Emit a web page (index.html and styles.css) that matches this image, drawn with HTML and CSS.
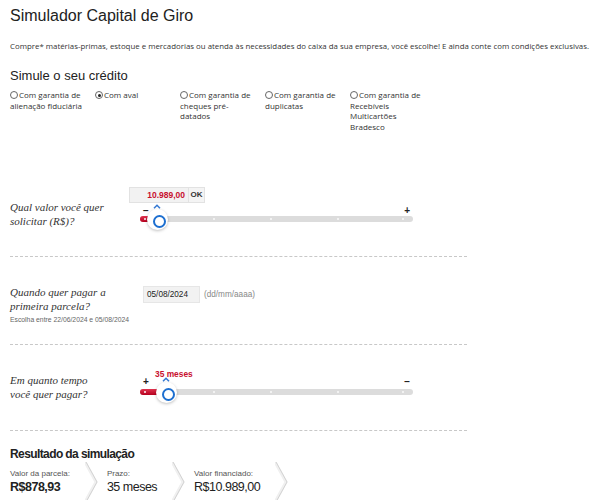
FILE: index.html
```html
<!DOCTYPE html>
<html lang="pt-BR">
<head>
<meta charset="utf-8">
<title>Simulador Capital de Giro</title>
<link rel="stylesheet" href="styles.css">
</head>
<body>
<main class="page">
  <h1 class="title">Simulador Capital de Giro</h1>
  <p class="intro">Compre* matérias-primas, estoque e mercadorias ou atenda às necessidades do caixa da sua empresa, você escolhe! E ainda conte com condições exclusivas.</p>

  <h2 class="subtitle">Simule o seu crédito</h2>
  <div class="options">
    <label class="opt"><span class="radio"></span>Com garantia de alienação fiduciária</label>
    <label class="opt"><span class="radio on"></span>Com aval</label>
    <label class="opt"><span class="radio"></span>Com garantia de cheques pré-datados</label>
    <label class="opt"><span class="radio"></span>Com garantia de duplicatas</label>
    <label class="opt"><span class="radio"></span>Com garantia de Recebíveis Multicartões Bradesco</label>
  </div>

  <section class="row row-value">
    <p class="question">Qual valor você quer solicitar (R$)?</p>
    <div class="control">
      <div class="amount">
        <span class="amount-input">10.989,00</span>
        <span class="ok">OK</span>
      </div>
      <div class="slider">
        <span class="sign sign-left">−</span>
        <span class="sign sign-right">+</span>
        <div class="track">
          <span class="fill" style="width: 17px"></span>
          <span class="dot" style="left: 4px"></span>
          <span class="dot" style="left: 73px"></span>
          <span class="dot" style="left: 130px"></span>
          <span class="dot" style="left: 197px"></span>
          <span class="dot" style="left: 262px"></span>
          <span class="knob" style="left: 17px">
            <svg class="caret" width="8" height="5" viewBox="0 0 8 5"><path d="M1 4.2 L4 1.2 L7 4.2" fill="none" stroke="#3579d3" stroke-width="1.5"/></svg>
          </span>
        </div>
      </div>
    </div>
  </section>

  <section class="row row-date">
    <div class="question-block">
      <p class="question">Quando quer pagar a primeira parcela?</p>
      <p class="hint">Escolha entre 22/06/2024 e 05/08/2024</p>
    </div>
    <div class="date">
      <span class="date-input">05/08/2024</span>
      <span class="date-format">(dd/mm/aaaa)</span>
    </div>
  </section>

  <section class="row row-term">
    <p class="question">Em quanto tempo você quer pagar?</p>
    <div class="control">
      <div class="slider slider-term">
        <span class="months" style="left: 15px">35 meses</span>
        <span class="sign sign-left">+</span>
        <span class="sign sign-right">−</span>
        <div class="track">
          <span class="fill" style="width: 26px"></span>
          <span class="dot" style="left: 4px"></span>
          <span class="dot" style="left: 73px"></span>
          <span class="dot" style="left: 130px"></span>
          <span class="dot" style="left: 197px"></span>
          <span class="dot" style="left: 262px"></span>
          <span class="knob" style="left: 26px">
            <svg class="caret" width="8" height="5" viewBox="0 0 8 5"><path d="M1 4.2 L4 1.2 L7 4.2" fill="none" stroke="#3579d3" stroke-width="1.5"/></svg>
          </span>
        </div>
      </div>
    </div>
  </section>

  <section class="result">
    <h3 class="result-title">Resultado da simulação</h3>
    <div class="result-items">
      <div class="item">
        <span class="item-label">Valor da parcela:</span>
        <span class="item-value strong">R$878,93</span>
      </div>
      <svg class="chev" width="13" height="40" viewBox="0 0 13 40"><path d="M0 0 L11 20 L0 40" fill="none" stroke="#f0f0f0" stroke-width="3"/><path d="M1 0 L12 20 L1 40" fill="none" stroke="#d2d2d2" stroke-width="1"/></svg>
      <div class="item">
        <span class="item-label">Prazo:</span>
        <span class="item-value">35 meses</span>
      </div>
      <svg class="chev" width="13" height="40" viewBox="0 0 13 40"><path d="M0 0 L11 20 L0 40" fill="none" stroke="#f0f0f0" stroke-width="3"/><path d="M1 0 L12 20 L1 40" fill="none" stroke="#d2d2d2" stroke-width="1"/></svg>
      <div class="item">
        <span class="item-label">Valor financiado:</span>
        <span class="item-value">R$10.989,00</span>
      </div>
      <svg class="chev" width="13" height="40" viewBox="0 0 13 40"><path d="M0 0 L11 20 L0 40" fill="none" stroke="#f0f0f0" stroke-width="3"/><path d="M1 0 L12 20 L1 40" fill="none" stroke="#d2d2d2" stroke-width="1"/></svg>
    </div>
  </section>
</main>
</body>
</html>
```

FILE: styles.css
```css
* { box-sizing: border-box; }

html, body {
  margin: 0;
  padding: 0;
  background: #fff;
}

body {
  font-family: "Liberation Sans", Arial, sans-serif;
  color: #333;
}

.page {
  padding: 0 10px;
  width: 609px;
}

.title {
  margin: 6px 0 0;
  font-size: 16px;
  line-height: 19px;
  font-weight: normal;
  color: #222;
}

.intro {
  margin: 16px 0 0;
  font-family: "Open Sans", sans-serif;
  font-size: 7.86px;
  line-height: 11px;
  color: #333;
  white-space: nowrap;
}

.subtitle {
  margin: 16px 0 0;
  font-size: 13px;
  line-height: 15px;
  font-weight: normal;
  color: #222;
}

.options {
  display: flex;
  margin-top: 7px;
  height: 44px;
}

.opt {
  display: block;
  width: 85px;
  padding-right: 9px;
  font-family: "Open Sans", sans-serif;
  font-size: 8px;
  line-height: 10.6px;
  color: #333;
}

.radio {
  display: inline-block;
  width: 8px;
  height: 8px;
  margin-right: 1px;
  vertical-align: -1px;
  border: 1px solid #666;
  border-radius: 50%;
  position: relative;
}

.radio.on::after {
  content: "";
  position: absolute;
  left: 1.5px;
  top: 1.5px;
  width: 3px;
  height: 3px;
  border-radius: 50%;
  background: #222;
}

/* question rows separated by dashed rules */
.row {
  display: flex;
  width: 457px;
  border-bottom: 1px dashed #c8c8c8;
}

.question {
  margin: 0;
  width: 100px;
  font-family: "Liberation Serif", "Times New Roman", serif;
  font-style: italic;
  font-size: 11px;
  line-height: 13.5px;
  color: #333;
}

.row-value {
  margin-top: 42px;
  height: 81px;
  padding-top: 11px;
}

.row-value .question {
  margin-top: 14px;
  margin-right: 19px;
}

.control {
  display: flex;
  flex-direction: column;
}

.amount {
  display: flex;
  height: 16px;
}

.amount-input {
  width: 59px;
  background: #f2f2f2;
  border: 1px solid #e2e2e2;
  border-right: none;
  color: #c8102e;
  font-weight: bold;
  font-size: 8.5px;
  line-height: 14px;
  text-align: right;
  padding-right: 3px;
}

.ok {
  width: 17px;
  background: #f4f4f4;
  border: 1px solid #e2e2e2;
  font-size: 8px;
  font-weight: bold;
  line-height: 14px;
  color: #333;
  text-align: center;
}

.slider {
  position: relative;
  width: 273px;
  height: 24px;
  margin-left: 11px;
}

.track {
  position: absolute;
  left: 0;
  right: 0;
  top: 13px;
  height: 6px;
  border-radius: 3px;
  background: #dcdcdc;
}

.fill {
  position: absolute;
  left: 0;
  top: 0;
  bottom: 0;
  border-radius: 3px 0 0 3px;
  background: linear-gradient(#e0334f, #b5001e);
}

.dot {
  position: absolute;
  top: 2px;
  width: 2px;
  height: 2px;
  border-radius: 50%;
  background: #fafafa;
}

.knob {
  position: absolute;
  top: 3px;
  width: 21px;
  height: 21px;
  margin: -10.5px 0 0 -10.5px;
  border-radius: 50%;
  background: #fff;
  box-shadow: 0 1px 3px rgba(0, 0, 0, 0.25);
}

.knob::after {
  content: "";
  position: absolute;
  left: 6px;
  top: 6px;
  width: 9px;
  height: 9px;
  border: 2px solid #1d6fd0;
  border-radius: 50%;
}

.caret {
  position: absolute;
  left: 6.5px;
  top: -5px;
}

.sign {
  position: absolute;
  top: 3px;
  font-size: 10px;
  line-height: 10px;
  font-weight: bold;
  color: #222;
}

.sign-left { left: 3px; }
.sign-right { right: 3px; }

.row-date {
  height: 88px;
  padding-top: 29px;
}

.question-block {
  width: 133px;
}

.hint {
  margin: 3px 0 0;
  font-size: 6.8px;
  line-height: 8px;
  color: #666;
}

.date {
  display: flex;
  align-items: flex-start;
  height: 17px;
}

.date-input {
  width: 57px;
  height: 17px;
  background: #f2f2f2;
  border: 1px solid #e6e6e6;
  font-size: 8.2px;
  line-height: 15px;
  padding-left: 3px;
  color: #222;
}

.date-format {
  margin-left: 4px;
  font-size: 8.2px;
  line-height: 17px;
  color: #888;
}

.row-term {
  height: 86px;
  padding-top: 29px;
}

.row-term .question {
  margin-right: 19px;
}

.slider-term {
  margin-top: -5px;
  height: 30px;
}

.slider-term .track { top: 20px; }
.slider-term .sign { top: 8px; }

.months {
  position: absolute;
  top: 0;
  font-size: 8.4px;
  line-height: 10px;
  font-weight: bold;
  color: #c8102e;
}

.result {
  padding-top: 16px;
}

.result-title {
  margin: 0;
  font-size: 12px;
  line-height: 14px;
  font-weight: bold;
  letter-spacing: -0.6px;
  color: #222;
}

.result-items {
  display: flex;
  align-items: flex-start;
  margin-top: 8px;
}

.item {
  display: flex;
  flex-direction: column;
  margin-right: 15px;
}

.item-label {
  font-size: 8px;
  line-height: 10px;
  color: #555;
}

.item-value {
  font-size: 12.5px;
  line-height: 16px;
  letter-spacing: -0.5px;
  color: #222;
}

.item-value.strong { font-weight: bold; }

.chev {
  flex: none;
  margin-top: -7px;
  margin-right: 9px;
}
```
